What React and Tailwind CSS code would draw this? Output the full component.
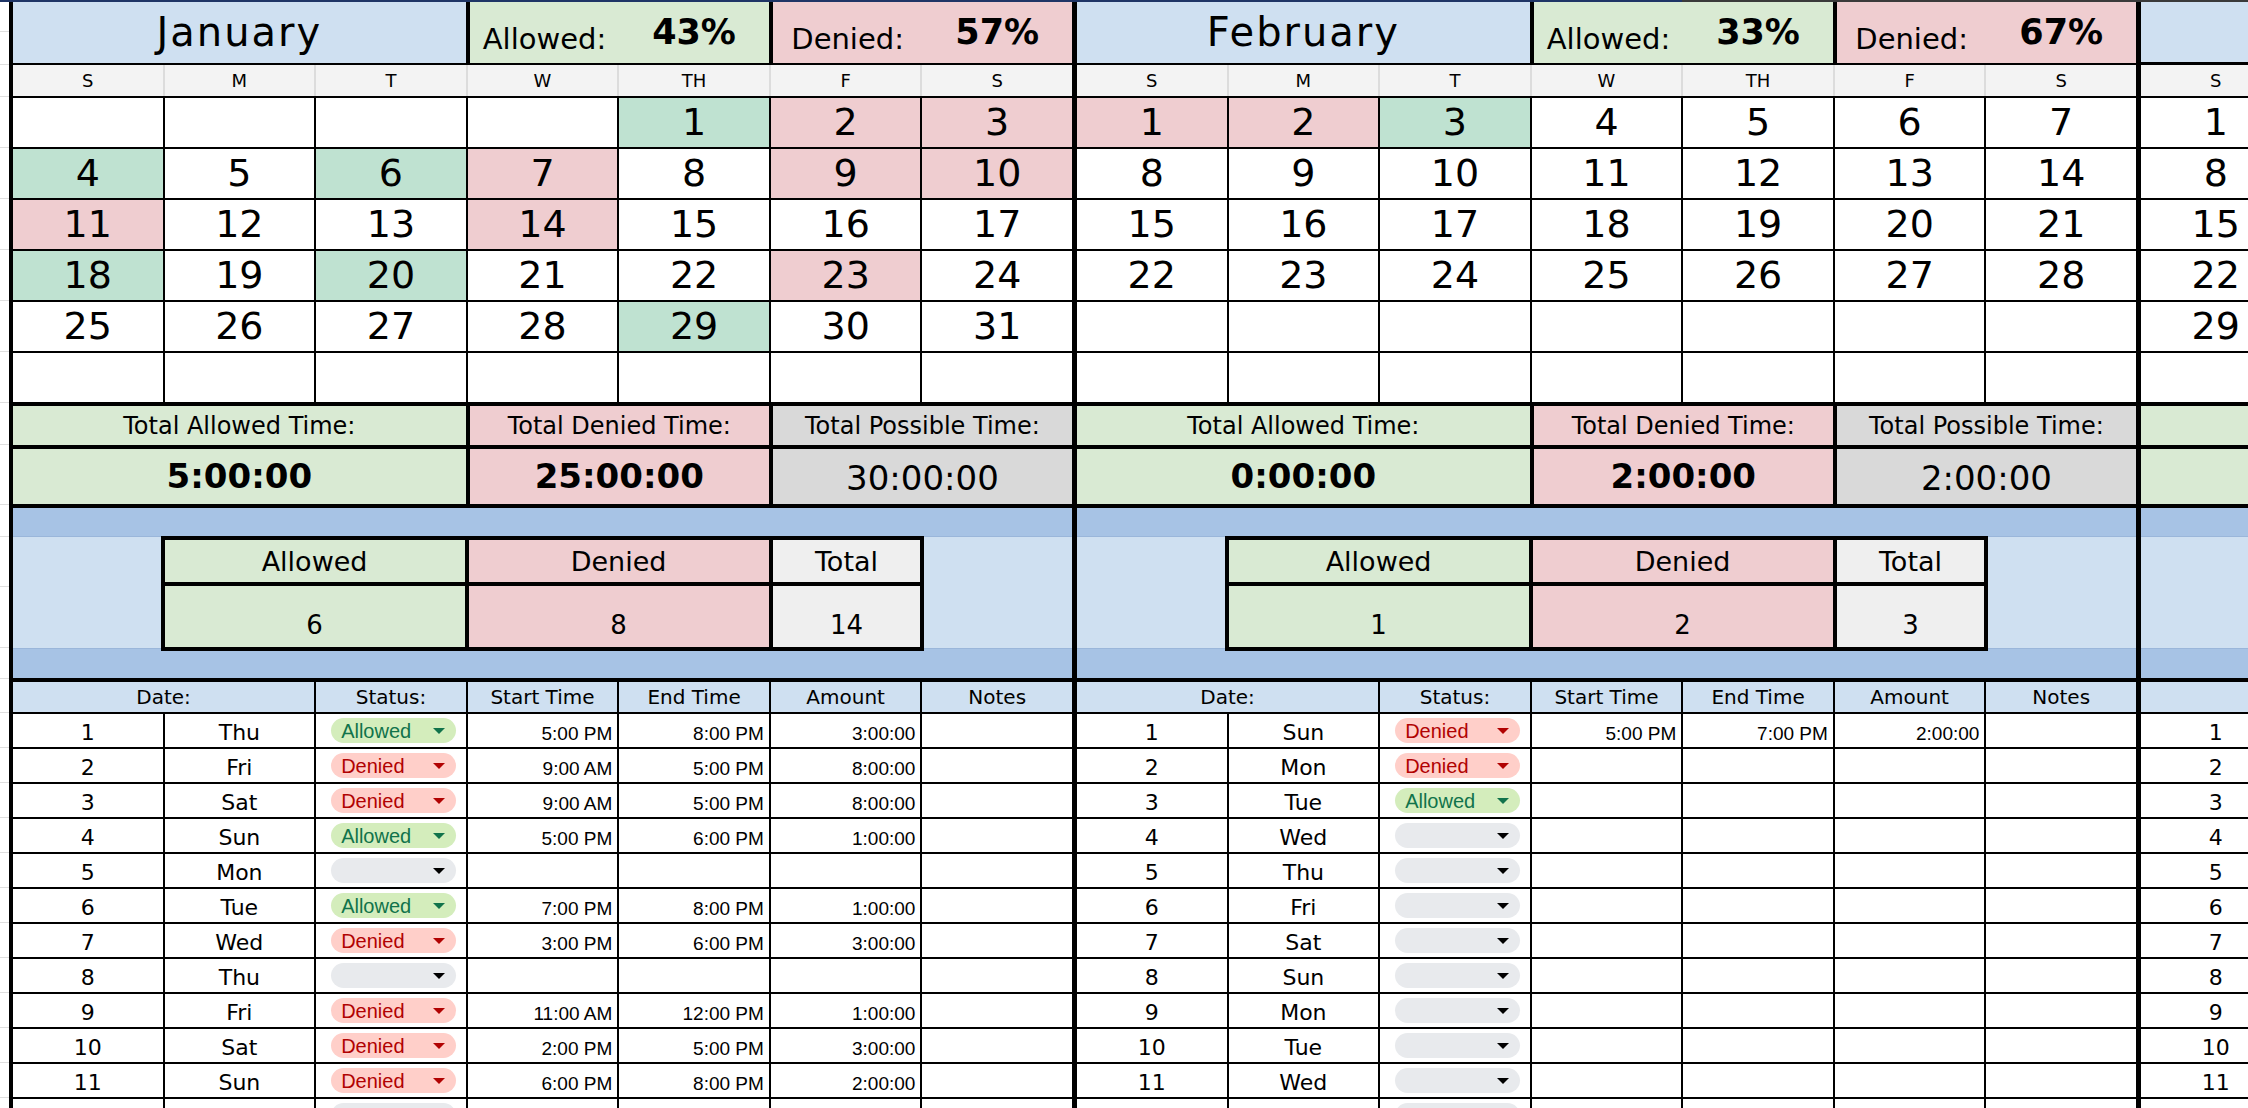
import React from 'react'

const DAY_LETTERS = ['S', 'M', 'T', 'W', 'TH', 'F', 'S']
const WEEK = ['Sun', 'Mon', 'Tue', 'Wed', 'Thu', 'Fri', 'Sat']

const JAN = {
  name: 'January',
  allowedPct: '43%',
  deniedPct: '57%',
  lead: 4,
  days: 31,
  marks: { 1: 'a', 2: 'd', 3: 'd', 4: 'a', 6: 'a', 7: 'd', 9: 'd', 10: 'd', 11: 'd', 14: 'd', 18: 'a', 20: 'a', 23: 'd', 29: 'a' },
  totals: ['5:00:00', '25:00:00', '30:00:00'],
  counts: [6, 8, 14],
  log: {
    1: ['Allowed', '5:00 PM', '8:00 PM', '3:00:00'],
    2: ['Denied', '9:00 AM', '5:00 PM', '8:00:00'],
    3: ['Denied', '9:00 AM', '5:00 PM', '8:00:00'],
    4: ['Allowed', '5:00 PM', '6:00 PM', '1:00:00'],
    6: ['Allowed', '7:00 PM', '8:00 PM', '1:00:00'],
    7: ['Denied', '3:00 PM', '6:00 PM', '3:00:00'],
    9: ['Denied', '11:00 AM', '12:00 PM', '1:00:00'],
    10: ['Denied', '2:00 PM', '5:00 PM', '3:00:00'],
    11: ['Denied', '6:00 PM', '8:00 PM', '2:00:00'],
  },
}

const FEB = {
  name: 'February',
  allowedPct: '33%',
  deniedPct: '67%',
  lead: 0,
  days: 28,
  marks: { 1: 'd', 2: 'd', 3: 'a' },
  totals: ['0:00:00', '2:00:00', '2:00:00'],
  counts: [1, 2, 3],
  log: {
    1: ['Denied', '5:00 PM', '7:00 PM', '2:00:00'],
    2: ['Denied'],
    3: ['Allowed'],
  },
}

// March only peeks in at the right edge: the texts that sit beyond the edge are left out
const MAR = {
  name: '',
  allowedPct: '',
  deniedPct: '',
  lead: 0,
  days: 31,
  marks: {},
  totals: ['', '', ''],
  counts: ['', '', ''],
  log: {},
  partial: true,
}

// light row lines of the sheet's row-number strip on the far left
const GUTTER = [30, 33, 32, 51, 51, 51, 51, 51, 51, 42, 60, 32, 50, 61, 31, 34, 35, 35, 35, 35, 35, 35, 35, 35, 35, 35, 35, 35]

export default function App() {
  return (
    <div className="w-[2248px] h-[1108px] overflow-hidden bg-white text-black font-['DejaVu_Sans',sans-serif]">
      <div className="flex h-[2px]">
        <div className="w-[1682px] bg-[#1f3566]" />
        <div className="flex-1 bg-[#3a3a3a]" />
      </div>
      <div className="flex">
        <div className="w-[9px] shrink-0 flex flex-col bg-white">
          {GUTTER.map((h, i) => (
            <div key={i} style={{ height: h }} className="shrink-0 border-b border-[#dedede]" />
          ))}
        </div>
        <div className="w-[4px] shrink-0 bg-black" />
        <MonthBlock m={JAN} year={2026} monthIndex={0} />
        <div className="w-[5px] shrink-0 bg-black" />
        <MonthBlock m={FEB} year={2026} monthIndex={1} />
        <div className="w-[5px] shrink-0 bg-black" />
        <MonthBlock m={MAR} year={2026} monthIndex={2} />
      </div>
    </div>
  )
}

function MonthBlock({ m, year, monthIndex }) {
  const cells = Array.from({ length: 42 }, (_, i) => {
    const d = i - m.lead + 1
    return d >= 1 && d <= m.days ? d : null
  })
  const rows = Array.from({ length: 12 }, (_, i) => i + 1)

  return (
    <div className="w-[1059px] shrink-0 flex flex-col">
      {/* Encabezado del mes */}
      <div className="h-[63px] grid grid-cols-7 gap-x-[2px] bg-black border-b-[3px] border-black">
        <div className="col-span-3 bg-[#cfe0f1] flex items-center justify-center text-[40px] tracking-[2px] pb-[1px]">
          {m.name}
        </div>
        <div className="col-span-2 grid grid-cols-2 bg-[#d9ead3] border-l-2 border-black">
          <span className="flex items-center justify-center text-[29px] pt-[14px]">{m.partial ? '' : 'Allowed:'}</span>
          <span className="flex items-center justify-center text-[35px] font-bold">{m.allowedPct}</span>
        </div>
        <div className="col-span-2 grid grid-cols-2 bg-[#efcdd0] border-l-2 border-black">
          <span className="flex items-center justify-center text-[29px] pt-[14px]">{m.partial ? '' : 'Denied:'}</span>
          <span className="flex items-center justify-center text-[35px] font-bold">{m.deniedPct}</span>
        </div>
      </div>

      {/* Días de la semana */}
      <div className="h-[33px] grid grid-cols-7 gap-x-[2px] bg-[#dcdcdc] border-b-2 border-black">
        {DAY_LETTERS.map((l, i) => (
          <div key={i} className="bg-[#f3f3f3] flex items-center justify-center text-[18px]">
            {m.partial && i > 0 ? '' : l}
          </div>
        ))}
      </div>

      {/* Calendario */}
      <div className="grid grid-cols-7 grid-rows-[repeat(6,49px)] gap-[2px] bg-black border-b-4 border-black">
        {cells.map((d, i) => {
          const mark = d ? m.marks[d] : null
          const bg = mark === 'a' ? 'bg-[#bfe2d1]' : mark === 'd' ? 'bg-[#efcdd0]' : 'bg-white'
          const hidden = m.partial && i % 7 !== 0
          return (
            <div key={i} className={`${bg} flex items-center justify-center text-[38px]`}>
              {hidden ? null : d}
            </div>
          )
        })}
      </div>

      {/* Totales */}
      <div className="h-[43px] grid grid-cols-7 gap-x-[2px] bg-black border-b-4 border-black text-[24px]">
        <div className="col-span-3 bg-[#d9ead3] flex items-center justify-center">Total Allowed Time:</div>
        <div className="col-span-2 bg-[#efcdd0] border-l-2 border-black flex items-center justify-center">
          {m.partial ? '' : 'Total Denied Time:'}
        </div>
        <div className="col-span-2 bg-[#d9d9d9] border-l-2 border-black flex items-center justify-center">
          {m.partial ? '' : 'Total Possible Time:'}
        </div>
      </div>
      <div className="h-[59px] grid grid-cols-7 gap-x-[2px] bg-black border-b-4 border-black text-[34px]">
        <div className="col-span-3 bg-[#d9ead3] flex items-center justify-center font-bold">{m.totals[0]}</div>
        <div className="col-span-2 bg-[#efcdd0] border-l-2 border-black flex items-center justify-center font-bold">{m.totals[1]}</div>
        <div className="col-span-2 bg-[#d9d9d9] border-l-2 border-black flex items-center justify-center pt-[3px]">{m.totals[2]}</div>
      </div>

      {/* Resumen */}
      <div className="h-[29px] bg-[#a7c3e5] border-b border-[#9ab6da]" />
      <div className="h-[111px] grid grid-cols-7 gap-x-[2px] bg-[#cfe0f1] items-start">
        <div className="col-start-2 col-span-5 -mx-[4px] -mt-[1px] h-[115px] relative z-10 border-4 border-black bg-black grid grid-cols-[300px_300px_1fr] grid-rows-[42px_61px] gap-[4px]">
          <div className="bg-[#d9ead3] flex items-center justify-center text-[27px] pt-[3px]">{m.partial ? '' : 'Allowed'}</div>
          <div className="bg-[#efcdd0] flex items-center justify-center text-[27px] pt-[3px]">{m.partial ? '' : 'Denied'}</div>
          <div className="bg-[#efefef] flex items-center justify-center text-[27px] pt-[3px]">{m.partial ? '' : 'Total'}</div>
          <div className="bg-[#d9ead3] flex items-center justify-center text-[26px] pt-[18px]">{m.counts[0]}</div>
          <div className="bg-[#efcdd0] flex items-center justify-center text-[26px] pt-[18px]">{m.counts[1]}</div>
          <div className="bg-[#efefef] flex items-center justify-center text-[26px] pt-[18px]">{m.counts[2]}</div>
        </div>
      </div>
      <div className="h-[34px] bg-[#a7c3e5] border-t border-[#9ab6da] border-b-4 border-b-black" />

      {/* Registro diario */}
      <div className="h-[32px] grid grid-cols-7 gap-x-[2px] bg-black border-b-2 border-black text-[20px]">
        <div className="col-span-2 bg-[#cfe0f1] flex items-center justify-center">{m.partial ? '' : 'Date:'}</div>
        <div className="bg-[#cfe0f1] flex items-center justify-center">{m.partial ? '' : 'Status:'}</div>
        <div className="bg-[#cfe0f1] flex items-center justify-center">{m.partial ? '' : 'Start Time'}</div>
        <div className="bg-[#cfe0f1] flex items-center justify-center">{m.partial ? '' : 'End Time'}</div>
        <div className="bg-[#cfe0f1] flex items-center justify-center">{m.partial ? '' : 'Amount'}</div>
        <div className="bg-[#cfe0f1] flex items-center justify-center">{m.partial ? '' : 'Notes'}</div>
      </div>
      <div className="grid grid-cols-7 auto-rows-[33px] gap-[2px] bg-black">
        {rows.map((d) => {
          const entry = m.log[d] || []
          const weekday = WEEK[new Date(year, monthIndex, d).getDay()]
          // the last row is only a sliver at the bottom edge of the sheet
          const sliver = d === 12
          return (
            <React.Fragment key={d}>
              <div className="bg-white flex items-center justify-center text-[22px] pt-[3px]">{sliver ? null : d}</div>
              <div className="bg-white flex items-center justify-center text-[22px] pt-[3px]">
                {sliver || m.partial ? null : weekday}
              </div>
              <div className="bg-white flex items-center">
                {m.partial ? null : <StatusPill status={entry[0]} />}
              </div>
              <TimeCell value={entry[1]} />
              <TimeCell value={entry[2]} />
              <TimeCell value={entry[3]} />
              <div className="bg-white" />
            </React.Fragment>
          )
        })}
      </div>
    </div>
  )
}

function TimeCell({ value }) {
  return (
    <div className="bg-white flex items-center justify-end pr-[5px] pt-[7px] text-[19px] font-['Liberation_Sans',Arial,sans-serif]">
      {value}
    </div>
  )
}

function StatusPill({ status }) {
  const colors =
    status === 'Allowed'
      ? 'bg-[#d4edbc] text-[#11734b]'
      : status === 'Denied'
        ? 'bg-[#ffcfc9] text-[#b10202]'
        : 'bg-[#e8eaed] text-black'
  return (
    <div className={`ml-[15px] w-[125px] h-[25px] rounded-full flex items-center justify-between pl-[10px] pr-[11px] ${colors}`}>
      <span className="text-[20px] leading-none font-['Liberation_Sans',Arial,sans-serif]">{status}</span>
      <svg width="12" height="6" viewBox="0 0 12 6">
        <path d="M0 0h12L6 6z" fill="currentColor" />
      </svg>
    </div>
  )
}
